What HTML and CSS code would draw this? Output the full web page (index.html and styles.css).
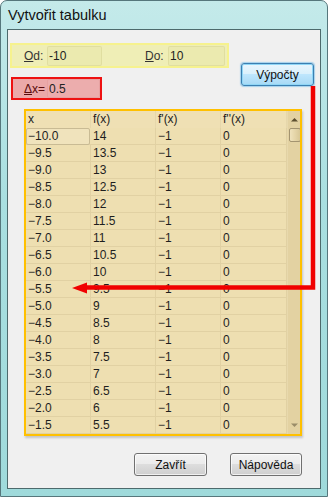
FILE: index.html
```html
<!DOCTYPE html>
<html lang="cs">
<head>
    <meta charset="UTF-8">
    <meta name="viewport" content="width=device-width, initial-scale=1.0">
    <title>Vytvořit tabulku</title>
    <link rel="stylesheet" href="styles.css">
</head>
<body>
    <div class="window">
        <div class="titlebar">Vytvořit tabulku</div>
        <div class="client">
            <div class="top">
                <div class="fields">
                    <div class="range">
                        <label class="lbl" for="od"><u>O</u>d:</label>
                        <input class="field field-od" id="od" type="text" value="-10">
                        <label class="lbl lbl-do" for="do"><u>D</u>o:</label>
                        <input class="field field-do" id="do" type="text" value="10">
                    </div>
                    <div class="step">
                        <label class="lbl lbl-dx" for="dx"><u>Δ</u>x=</label>
                        <input class="field field-dx" id="dx" type="text" value="0.5">
                    </div>
                </div>
                <button class="btn btn-default">Výpočty</button>
            </div>

            <div class="grid">
                <div class="cells">
                    <div class="row head"><span>x</span><span>f(x)</span><span>f'(x)</span><span>f''(x)</span></div>
                    <div class="row"><span class="focus">−10.0</span><span>14</span><span>−1</span><span>0</span></div>
                    <div class="row"><span>−9.5</span><span>13.5</span><span>−1</span><span>0</span></div>
                    <div class="row"><span>−9.0</span><span>13</span><span>−1</span><span>0</span></div>
                    <div class="row"><span>−8.5</span><span>12.5</span><span>−1</span><span>0</span></div>
                    <div class="row"><span>−8.0</span><span>12</span><span>−1</span><span>0</span></div>
                    <div class="row"><span>−7.5</span><span>11.5</span><span>−1</span><span>0</span></div>
                    <div class="row"><span>−7.0</span><span>11</span><span>−1</span><span>0</span></div>
                    <div class="row"><span>−6.5</span><span>10.5</span><span>−1</span><span>0</span></div>
                    <div class="row"><span>−6.0</span><span>10</span><span>−1</span><span>0</span></div>
                    <div class="row"><span>−5.5</span><span>9.5</span><span>−1</span><span>0</span></div>
                    <div class="row"><span>−5.0</span><span>9</span><span>−1</span><span>0</span></div>
                    <div class="row"><span>−4.5</span><span>8.5</span><span>−1</span><span>0</span></div>
                    <div class="row"><span>−4.0</span><span>8</span><span>−1</span><span>0</span></div>
                    <div class="row"><span>−3.5</span><span>7.5</span><span>−1</span><span>0</span></div>
                    <div class="row"><span>−3.0</span><span>7</span><span>−1</span><span>0</span></div>
                    <div class="row"><span>−2.5</span><span>6.5</span><span>−1</span><span>0</span></div>
                    <div class="row"><span>−2.0</span><span>6</span><span>−1</span><span>0</span></div>
                    <div class="row"><span>−1.5</span><span>5.5</span><span>−1</span><span>0</span></div>
                </div>
                <div class="scrollbar">
                    <svg class="arr" width="13" height="10" viewBox="0 0 13 10"><path d="M3 7h7L6.5 3.5z" fill="#5c4f30"/></svg>
                    <div class="thumb"></div>
                    <div class="track"></div>
                    <svg class="arr" width="13" height="10" viewBox="0 0 13 10"><path d="M3 3h7L6.5 6.5z" fill="#9a8c68"/></svg>
                </div>
            </div>

            <div class="actions">
                <button class="btn">Zavřít</button>
                <button class="btn">Nápověda</button>
            </div>
        </div>

        <!-- annotation: arrow from the button to the table -->
        <svg class="arrow" width="328" height="497" viewBox="0 0 328 497">
            <path d="M313 86V287.5H84" fill="none" stroke="#f00000" stroke-width="4.5"/>
            <path d="M72 288L87 282.5V293.5z" fill="#f00000"/>
        </svg>
    </div>
</body>
</html>
```

FILE: styles.css
```css
body {
    margin: 0;
    font-family: "Liberation Sans", Arial, sans-serif;
    font-size: 12px;
    color: #1e1e1e;
    background: #fff;
}

.window {
    position: relative;
    width: 328px;
    height: 497px;
    box-sizing: border-box;
    border: 1px solid #56777c;
    border-radius: 7px 7px 0 0;
    background: linear-gradient(180deg, #c4eaea 0%, #a9dfe0 40%, #9fdadb 100%);
}

.titlebar {
    height: 28px;
    padding-left: 7px;
    line-height: 28px;
    font-size: 14.5px;
    color: #111;
}

.client {
    margin: 0 6px;
    height: 460px;
    box-sizing: border-box;
    border: 1px solid #4d6a6c;
    background: #f0f0f0;
    padding-top: 13px;
}

.top {
    display: flex;
}

.fields {
    margin-left: 2px;
    width: 219px;
}

.range {
    display: flex;
    align-items: center;
    height: 25px;
    box-sizing: border-box;
    border: 2px solid #f6f28e;
    background: #efeeb6;
    padding-left: 12px;
}

.step {
    display: flex;
    align-items: center;
    margin: 9px 0 0 1px;
    width: 91px;
    height: 23px;
    box-sizing: border-box;
    border: 2px solid #ee1111;
    background: #eba9a9;
    padding-left: 11px;
}

.lbl {
    width: 23px;
    color: #333;
}

.lbl-do {
    margin-left: 43px;
}

.lbl-dx {
    color: #5a0c0c;
}

.field {
    height: 20px;
    box-sizing: border-box;
    margin: 0;
    padding: 0 0 0 1px;
    border: 1px solid rgba(150, 140, 60, 0.12);
    border-radius: 2px;
    background: rgba(180, 170, 60, 0.06);
    font: inherit;
    color: #222;
    outline: none;
}

.field-od {
    width: 55px;
}

.field-do {
    width: 57px;
}

.field-dx {
    width: 53px;
    height: 19px;
    border-color: rgba(180, 60, 60, 0.1);
    background: rgba(255, 255, 255, 0.05);
}

.btn {
    height: 23px;
    box-sizing: border-box;
    padding: 0;
    border: 1px solid #707070;
    border-radius: 3px;
    background: linear-gradient(180deg, #f3f3f3 0%, #ebebeb 49%, #dddddd 50%, #cfcfcf 100%);
    font: inherit;
    color: #111;
    box-shadow: inset 0 0 0 1px rgba(255, 255, 255, 0.7);
}

.btn-default {
    width: 73px;
    margin: 20px 0 0 12px;
    border-color: #3c7fb1;
    background: linear-gradient(180deg, #eaf6fd 0%, #d9f0fc 49%, #bee6fd 50%, #a7d9f5 100%);
    box-shadow: inset 0 0 0 1px #8fd6f6, 0 0 1px 1px rgba(70, 170, 230, 0.45);
}

.grid {
    display: flex;
    margin: 9px 0 0 16px;
    width: 278px;
    height: 327px;
    box-sizing: border-box;
    border: 2px solid #ffc000;
    background: #eedfb1;
    overflow: hidden;
    box-shadow: 1px 2px 2px rgba(0, 0, 0, 0.18);
}

.cells {
    width: 261px;
}

.row {
    display: grid;
    grid-template-columns: 65px 65px 65px 66px;
    height: 17px;
    box-sizing: border-box;
    border-bottom: 1px solid #e1d1a3;
}

.row span {
    padding-left: 2px;
    line-height: 17px;
    border-right: 1px solid #e1d1a3;
}

.head span {
    border-right-color: #e6d7ab;
    background: #efe0b4;
}

.row .focus {
    margin: 0 1px 0 0;
    padding-left: 1px;
    border: 1px solid #c9bb94;
    border-radius: 2px;
    line-height: 14px;
    background: #f0e3bc;
}

.scrollbar {
    display: flex;
    flex-direction: column;
    align-items: center;
    width: 13px;
    background: #e3d2a2;
    border-left: 1px solid #e8d9ad;
}

.arr {
    display: block;
    height: 17px;
}

.thumb {
    width: 12px;
    height: 14px;
    box-sizing: border-box;
    border: 1px solid #a39470;
    border-radius: 2px;
    background: linear-gradient(90deg, #efe2bc 0%, #e5d5a8 50%, #d8c796 100%);
}

.track {
    flex: 1;
}

.actions {
    display: flex;
    gap: 23px;
    margin: 17px 0 0 126px;
}

.actions .btn {
    width: 73px;
}

.actions .btn + .btn {
    width: 72px;
}

.arrow {
    position: absolute;
    left: -1px;
    top: -1px;
    pointer-events: none;
}
```
